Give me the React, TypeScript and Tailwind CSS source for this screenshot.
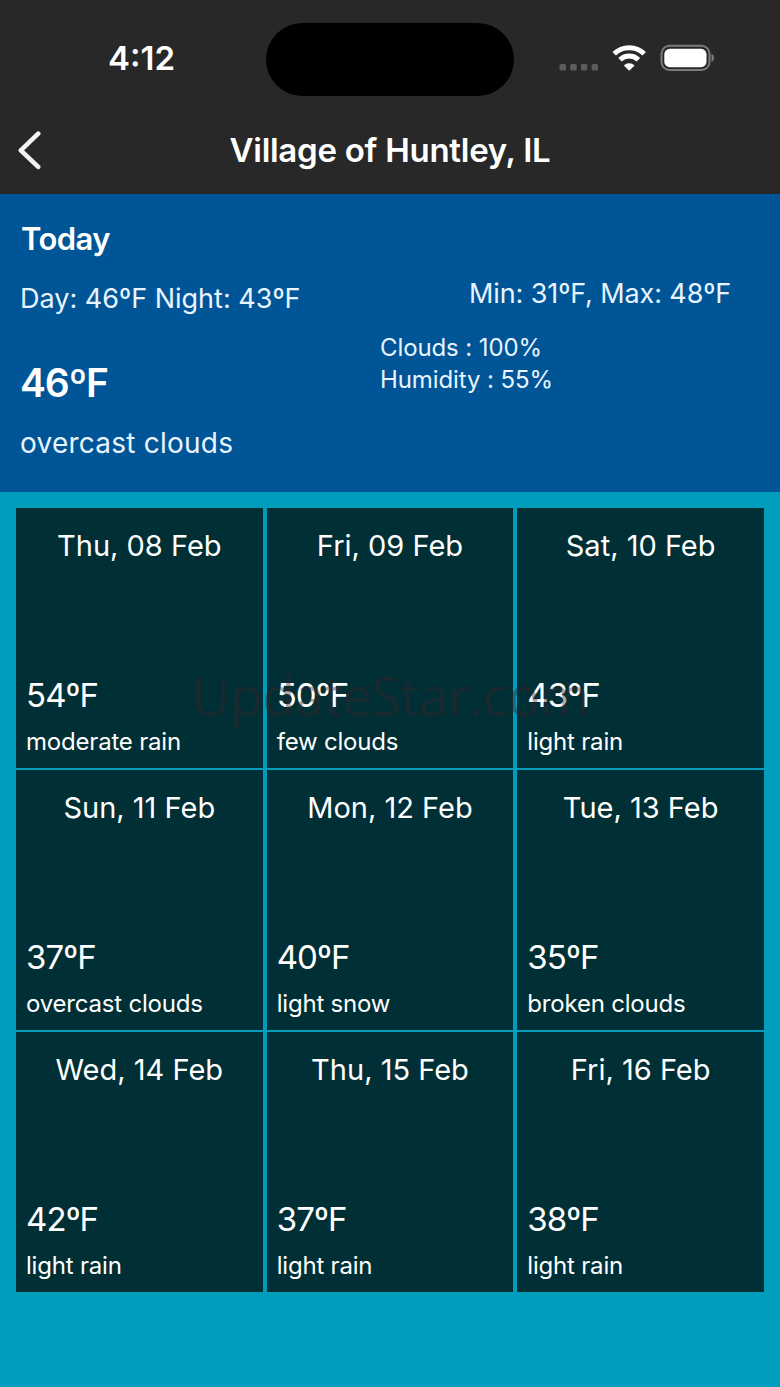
import type { ReactNode } from "react";

type Forecast = {
  date: string;
  temp: number;
  description: string;
};

const FORECAST: Forecast[] = [
  { date: "Thu, 08 Feb", temp: 54, description: "moderate rain" },
  { date: "Fri, 09 Feb", temp: 50, description: "few clouds" },
  { date: "Sat, 10 Feb", temp: 43, description: "light rain" },
  { date: "Sun, 11 Feb", temp: 37, description: "overcast clouds" },
  { date: "Mon, 12 Feb", temp: 40, description: "light snow" },
  { date: "Tue, 13 Feb", temp: 35, description: "broken clouds" },
  { date: "Wed, 14 Feb", temp: 42, description: "light rain" },
  { date: "Thu, 15 Feb", temp: 37, description: "light rain" },
  { date: "Fri, 16 Feb", temp: 38, description: "light rain" },
];

function StatusBar() {
  return (
    <div className="flex h-[118px] items-start justify-between pl-[108px] pr-[65px]">
      <div className="w-[158px] pt-[38px] text-[33px] leading-10 font-semibold">4:12</div>
      <div className="mt-[23px] h-[73px] w-[248px] rounded-full bg-black" />
      <div className="flex w-[201px] items-center justify-end pt-[44px]">
        <svg width="156" height="28" viewBox="0 0 156 28" fill="none">
          <g fill="#5c5c5c">
            <rect x="0.5" y="20" width="6.5" height="6.5" rx="1.5" />
            <rect x="11.2" y="20" width="6.5" height="6.5" rx="1.5" />
            <rect x="21.9" y="20" width="6.5" height="6.5" rx="1.5" />
            <rect x="32.6" y="20" width="6.5" height="6.5" rx="1.5" />
          </g>
          <g stroke="#fff" strokeWidth="5">
            <path d="M55.2 9.8a21.5 21.5 0 0 1 30 0" />
            <path d="M61 15.8a13.3 13.3 0 0 1 18.4 0" />
          </g>
          <path d="M70.2 26.8l-5.4-5.4a7.7 7.7 0 0 1 10.8 0z" fill="#fff" />
          <rect x="102.5" y="1.8" width="48" height="24.2" rx="8" stroke="#7c7c7c" strokeWidth="2" />
          <rect x="105.3" y="4.8" width="42.2" height="18.4" rx="5.5" fill="#fff" />
          <path d="M152.5 9.8c1.7.6 2.5 2.2 2.5 4s-.8 3.4-2.5 4z" fill="#7c7c7c" />
        </svg>
      </div>
    </div>
  );
}

function NavBar({ title }: { title: string }) {
  return (
    <div className="flex h-[76px] items-center px-[18px] pb-[12px]">
      <button aria-label="Back" className="w-[60px]">
        <svg width="24" height="40" viewBox="0 0 24 40" fill="none">
          <path d="M20.2 3.7L2.8 20.3L20.2 36.8" stroke="#f4f4f4" strokeWidth="4.6" strokeLinecap="round" strokeLinejoin="round" />
        </svg>
      </button>
      <h1 className="flex-1 text-center text-[33px] leading-10 font-semibold tracking-[-0.27px]">{title}</h1>
      <div className="w-[60px]" />
    </div>
  );
}

function Today() {
  return (
    <section className="flex h-[298px] bg-[#005596] pl-5">
      <div className="w-[360px]">
        <h2 className="mt-[25px] ml-px text-[31px] leading-10 font-semibold tracking-[-0.6px]">Today</h2>
        <p className="mt-[20px] text-[27px] leading-10 whitespace-nowrap text-[#e8f4ff]">Day: 46ºF Night: 43ºF</p>
        <p className="mt-[39px] text-[39px] leading-[50px] font-semibold tracking-[-1.1px]">46ºF</p>
        <p className="mt-[15px] text-[28px] leading-10 tracking-[0.23px] text-[#e8f4ff]">overcast clouds</p>
      </div>
      <div className="text-[#e8f4ff]">
        <p className="mt-[80px] ml-[89px] text-[27px] leading-10 tracking-[-0.1px] whitespace-nowrap">Min: 31ºF, Max: 48ºF</p>
        <div className="mt-[18px] text-[24px] leading-[32px] tracking-[-0.1px]">
          <p>Clouds : 100%</p>
          <p>Humidity : 55%</p>
        </div>
      </div>
    </section>
  );
}

function DayCard({ day }: { day: Forecast }) {
  return (
    <div className="flex h-[260px] flex-col bg-[#002f35] px-[10px] pt-[18px] pb-[8px]">
      <div className="text-center text-[29px] leading-10">{day.date}</div>
      <div className="mt-auto text-[33px] leading-10 tracking-[-0.9px]">{day.temp}ºF</div>
      <div className="mt-[9px] text-[24px] leading-9 tracking-[-0.2px]">{day.description}</div>
    </div>
  );
}

function Watermark({ children }: { children: ReactNode }) {
  return (
    <div className="pointer-events-none absolute inset-x-0 top-[173px] text-center font-['Open_Sans',sans-serif] text-[54px] leading-[60px] tracking-[-0.8px] text-[#3a2428]/40">
      {children}
    </div>
  );
}

export default function App() {
  return (
    <div className="h-[1387px] w-[780px] overflow-hidden bg-[#009dbd] font-['Inter',sans-serif] text-white">
      <header className="h-[194px] bg-[#282828]">
        <StatusBar />
        <NavBar title="Village of Huntley, IL" />
      </header>
      <Today />
      <main className="relative px-4 pt-4">
        <div className="grid grid-cols-3 gap-x-1 gap-y-[2px]">
          {FORECAST.map((day) => (
            <DayCard key={day.date} day={day} />
          ))}
        </div>
        <Watermark>UpdateStar.com</Watermark>
      </main>
    </div>
  );
}
